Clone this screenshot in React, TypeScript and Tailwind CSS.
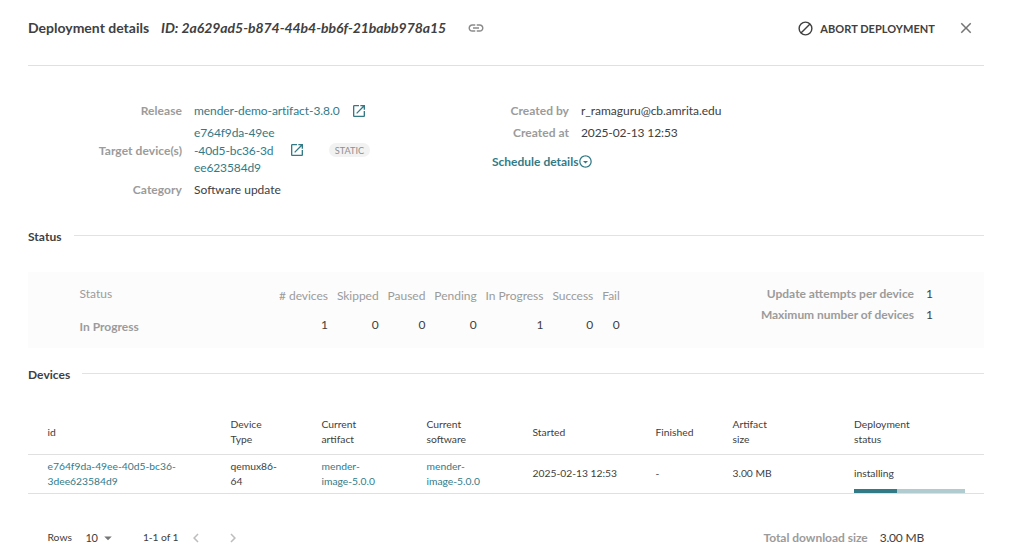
import React from 'react';

const OpenIcon = ({ className = '' }: { className?: string }) => (
  <svg viewBox="0 0 24 24" className={`size-4 shrink-0 fill-[#337a87] ${className}`}>
    <path d="M19 19H5V5h7V3H5c-1.11 0-2 .9-2 2v14c0 1.1.89 2 2 2h14c1.1 0 2-.9 2-2v-7h-2v7zM14 3v2h3.59l-9.83 9.83 1.41 1.41L19 6.41V10h2V3h-7z" />
  </svg>
);

const SectionTitle = ({ title }: { title: string }) => (
  <div className="flex h-[18px] items-center gap-3">
    <h2 className="text-[12px] leading-[18px] font-bold tracking-[0.04px]">{title}</h2>
    <div className="mb-[3px] h-px flex-1 bg-[#d9e6e5]" />
  </div>
);

const phases = [
  { name: '# devices', count: 1 },
  { name: 'Skipped', count: 0 },
  { name: 'Paused', count: 0 },
  { name: 'Pending', count: 0 },
  { name: 'In Progress', count: 1 },
  { name: 'Success', count: 0 },
  { name: 'Fail', count: 0 },
];

const columns = 'grid grid-cols-[183px_91px_105px_106px_123px_77px_121.5px_111px] items-center pl-[19.5px] text-[10.3px] leading-[15px]';

export default function App() {
  return (
    <main className="h-[560px] w-[1011px] overflow-hidden bg-white pr-[27px] pl-7 font-['Lato',sans-serif] text-[12px] text-[#404041]">
      <header className="flex h-[66px] items-center border-b border-[#e0e0e0] pb-[9px]">
        <h1 className="pb-0.5 text-[14px] font-bold whitespace-nowrap">Deployment details</h1>
        <span className="ml-3 w-[285px] pb-0.5 text-[14px] font-bold tracking-[-0.05px] whitespace-nowrap italic">ID: 2a629ad5-b874-44b4-bb6f-21babb978a15</span>
        <svg viewBox="0 0 24 24" className="ml-[21px] size-[18px] fill-[#8a8a8a]">
          <path d="M3.9 12c0-1.71 1.39-3.1 3.1-3.1h4V7H7c-2.76 0-5 2.24-5 5s2.24 5 5 5h4v-1.9H7c-1.71 0-3.1-1.39-3.1-3.1zM8 13h8v-2H8v2zm9-6h-4v1.9h4c1.71 0 3.1 1.39 3.1 3.1s-1.39 3.1-3.1 3.1h-4V17h4c2.76 0 5-2.24 5-5s-2.24-5-5-5z" />
        </svg>
        <button className="ml-auto flex items-center gap-[6px] text-[11px] font-bold">
          <svg viewBox="0 0 24 24" className="size-[17px] fill-none stroke-[#404041] stroke-2">
            <circle cx="12" cy="12" r="9" />
            <path d="M18.4 5.6 5.6 18.4" />
          </svg>
          <span className="pt-[2px] tracking-[0.05px]">ABORT DEPLOYMENT</span>
        </button>
        <svg viewBox="0 0 24 24" className="mr-[9px] ml-[22px] size-[18px] fill-[#757575]">
          <path d="M19 6.41 17.59 5 12 10.59 6.41 5 5 6.41 10.59 12 5 17.59 6.41 19 12 13.41 17.59 19 19 17.59 13.41 12z" />
        </svg>
      </header>

      <section className="flex h-[162px] pt-9 leading-[17.5px]">
        <div className="grid w-[455px] grid-cols-[154px_1fr] content-start items-center gap-x-3 gap-y-[4.5px]">
          <div className="text-right font-bold tracking-[0.06px] text-[#9b9b9b]">Release</div>
          <div className="flex items-center text-[#337a87]">
            <span className="w-[146px] tracking-[-0.07px] whitespace-nowrap">mender-demo-artifact-3.8.0</span>
            <OpenIcon className="ml-[11px]" />
          </div>
          <div className="text-right font-bold tracking-[0.06px] text-[#9b9b9b]">Target device(s)</div>
          <div className="flex items-center">
            <div className="w-[84px] tracking-[-0.12px] whitespace-nowrap text-[#337a87]">
              e764f9da-49ee
              <br />
              -40d5-bc36-3d
              <br />
              ee623584d9
            </div>
            <OpenIcon className="ml-[11px]" />
            <span className="ml-6 flex h-[14px] w-[41px] items-center justify-center rounded-full bg-[#f2f2f2] text-[9.2px] leading-none text-[#8f8f8f]">STATIC</span>
          </div>
          <div className="text-right font-bold tracking-[0.06px] text-[#9b9b9b]">Category</div>
          <div>Software update</div>
        </div>
        <div>
          <div className="grid grid-cols-[86px_1fr] gap-x-3 gap-y-[4.5px]">
            <div className="text-right font-bold tracking-[0.04px] text-[#9b9b9b]">Created by</div>
            <div className="tracking-[-0.03px]">r_ramaguru@cb.amrita.edu</div>
            <div className="text-right font-bold tracking-[0.04px] text-[#9b9b9b]">Created at</div>
            <div className="tracking-[-0.12px]">2025-02-13 12:53</div>
          </div>
          <div className="mt-[11px] ml-[9px] flex items-center font-bold text-[#337a87]">
            Schedule details
            <svg viewBox="0 0 24 24" className="size-[15px] fill-[#337a87]">
              <path d="M12 4c4.41 0 8 3.59 8 8s-3.59 8-8 8-8-3.59-8-8 3.59-8 8-8m0-2C6.48 2 2 6.48 2 12s4.48 10 10 10 10-4.48 10-10S17.52 2 12 2zm0 13-4-4h8z" />
            </svg>
          </div>
        </div>
      </section>

      <SectionTitle title="Status" />
      <section className="mt-[26px] flex h-[76px] bg-[#fcfcfc] text-[#9b9b9b]">
        <div className="w-[251px] pt-[13px] pl-[51.5px] leading-[18px]">
          <div>Status</div>
          <div className="mt-[15px] font-bold">In Progress</div>
        </div>
        <div className="flex gap-[9px] pt-[15px] text-right leading-[18px] tracking-[-0.03px] whitespace-nowrap">
          {phases.map(({ name, count }) => (
            <div key={name}>
              <div>{name}</div>
              <div className="mt-[11px] text-[#404041]">{count}</div>
            </div>
          ))}
        </div>
        <div className="mr-[51px] ml-auto grid grid-cols-[auto_7px] content-start gap-x-3 gap-y-[3px] pt-[13px] text-right leading-[18px]">
          <div className="font-bold">Update attempts per device</div>
          <div className="text-[#404041]">1</div>
          <div className="font-bold tracking-[-0.03px]">Maximum number of devices</div>
          <div className="text-[#404041]">1</div>
        </div>
      </section>

      <div className="mt-[18px]">
        <SectionTitle title="Devices" />
      </div>
      <section className="mt-[27px]">
        <div className={`${columns} h-[44px] border-b border-[#e0e0e0] pb-px`}>
          <div>id</div>
          <div>Device<br />Type</div>
          <div>Current<br />artifact</div>
          <div>Current<br />software</div>
          <div>Started</div>
          <div>Finished</div>
          <div>Artifact<br />size</div>
          <div>Deployment<br />status</div>
        </div>
        <div className={`${columns} h-[39px] border-b border-[#e0e0e0]`}>
          <div className="text-[#337a87]">e764f9da-49ee-40d5-bc36-<br />3dee623584d9</div>
          <div>qemux86-<br />64</div>
          <div className="text-[#337a87]">mender-<br />image-5.0.0</div>
          <div className="text-[#337a87]">mender-<br />image-5.0.0</div>
          <div className="-mt-px">2025-02-13 12:53</div>
          <div className="-mt-px">-</div>
          <div className="-mt-px">3.00 MB</div>
          <div className="flex h-full flex-col justify-between pt-[11px]">
            <span>installing</span>
            <div className="h-1 bg-[#b0ccd1]">
              <div className="h-full w-[43px] bg-[#337a87]" />
            </div>
          </div>
        </div>
      </section>

      <footer className="mt-[35px] flex h-[18px] items-center pl-[19.5px] text-[10.3px] whitespace-nowrap">
        <span className="w-[38px]">Rows</span>
        <span className="w-[13.5px] text-[11px] tracking-[-0.3px]">10</span>
        <svg viewBox="0 0 24 24" className="size-[18px] fill-[#757575]">
          <path d="m7 10 5 5 5-5z" />
        </svg>
        <span className="ml-[26px] w-[44px] tracking-[-0.1px]">1-1 of 1</span>
        <svg viewBox="0 0 24 24" className="size-[18px] fill-[#bdbdbd]">
          <path d="M15.41 7.41 14 6l-6 6 6 6 1.41-1.41L10.83 12z" />
        </svg>
        <svg viewBox="0 0 24 24" className="ml-[19px] size-[18px] fill-[#bdbdbd]">
          <path d="M10 6 8.59 7.41 13.17 12l-4.58 4.59L10 18l6-6z" />
        </svg>
        <div className="mr-[60px] ml-auto flex gap-3 text-[12px]">
          <span className="font-bold tracking-[-0.03px] text-[#9b9b9b]">Total download size</span>
          <span className="tracking-[-0.2px]">3.00 MB</span>
        </div>
      </footer>
    </main>
  );
}
